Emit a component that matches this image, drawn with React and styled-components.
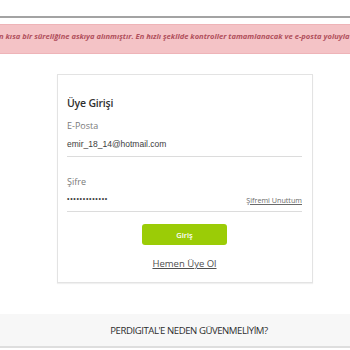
import React from "react";
import styled, { createGlobalStyle } from "styled-components";

const Global = createGlobalStyle`
  html, body { margin: 0; padding: 0; background: #fff; }
  body { font-family: "Open Sans", "Liberation Sans", sans-serif; width: 350px; height: 350px; overflow: hidden; }
`;

const Page = styled.div`
  display: flex;
  flex-direction: column;
  width: 350px;
  padding-top: 16px;
`;

const TopRule = styled.div`
  height: 2px;
  background: #a3a3a3;
`;

const Banner = styled.div`
  margin-top: 6px;
  height: 28px;
  background: #f4c3c6;
  border-top: 1px solid #eeb4b8;
  border-bottom: 1px solid #eeb4b8;
  overflow: hidden;
  white-space: nowrap;
  display: flex;
  align-items: flex-start;
`;

const BannerText = styled.span`
  font-size: 7.6px;
  font-weight: 700;
  font-style: italic;
  color: #b1505c;
  margin-top: 6px;
  margin-left: ${(p) => p.$shift}px;
`;

const Card = styled.div`
  box-sizing: border-box;
  margin: 20px 0 0 57px;
  width: 256px;
  height: 209px;
  padding: 0 10px 0 9px;
  border: 1px solid #e3e3e3;
  box-shadow: 0 1px 1px rgba(0, 0, 0, 0.06);
  display: flex;
  flex-direction: column;
`;

const Title = styled.div`
  margin-top: 21px;
  font-size: 10.5px;
  font-weight: 600;
  color: #2f2f2f;
  line-height: 14px;
  letter-spacing: -0.2px;
`;

const Label = styled.div`
  margin-top: ${(p) => p.$top}px;
  font-size: 9px;
  color: #7a7a7a;
  line-height: 12px;
`;

const Field = styled.div`
  box-sizing: border-box;
  margin-top: ${(p) => p.$top}px;
  height: 19px;
  border-bottom: 1px solid #dcdcdc;
  display: flex;
  align-items: flex-start;
  justify-content: space-between;
`;

const Value = styled.span`
  font-family: "Liberation Sans", Arial, sans-serif;
  font-size: 8.5px;
  color: #3c3c3c;
  line-height: 12px;
`;

const Dots = styled.span`
  font-family: "Liberation Sans", Arial, sans-serif;
  font-size: 7px;
  color: #3c3c3c;
  line-height: 12px;
  letter-spacing: 0.7px;
`;

const Forgot = styled.a`
  font-size: 7.2px;
  color: #6a6a6a;
  text-decoration: underline;
  line-height: 12px;
  margin-top: 1px;
`;

const Button = styled.button`
  align-self: center;
  margin-top: 12px;
  width: 85px;
  height: 21px;
  border: none;
  border-radius: 3px;
  background: #9bcc06;
  color: #fff;
  font-family: "Open Sans", sans-serif;
  font-size: 7.5px;
  font-weight: 600;
  padding: 0;
  flex-shrink: 0;
`;

const Register = styled.a`
  align-self: center;
  margin-top: 12px;
  font-size: 9.5px;
  color: #4f4f4f;
  text-decoration: underline;
  line-height: 13px;
`;

const Trust = styled.div`
  margin-top: 31px;
  height: 32px;
  background: #f7f7f7;
  border-bottom: 2px solid #dedede;
  display: flex;
  align-items: center;
  justify-content: center;
  padding-left: 28px;
`;

const TrustText = styled.span`
  font-size: 9.6px;
  color: #2e2e2e;
  letter-spacing: -0.45px;
`;

export default function App() {
  return (
    <>
      <Global />
      <Page>
        <TopRule />
        <Banner>
          <BannerText $shift={-1}>
            n kısa bir süreliğine askıya alınmıştır. En hızlı şekilde kontroller tamamlanacak ve e-posta yoluyla
          </BannerText>
        </Banner>
        <Card>
          <Title>Üye Girişi</Title>
          <Label $top={10}>E-Posta</Label>
          <Field $top={6}>
            <Value>emir_18_14@hotmail.com</Value>
          </Field>
          <Label $top={19}>Şifre</Label>
          <Field $top={5}>
            <Dots>•••••••••••••</Dots>
            <Forgot href="#">Şifremi Unuttum</Forgot>
          </Field>
          <Button>Giriş</Button>
          <Register href="#">Hemen Üye Ol</Register>
        </Card>
        <Trust>
          <TrustText>PERDIGITAL'E NEDEN GÜVENMELİYİM?</TrustText>
        </Trust>
      </Page>
    </>
  );
}
